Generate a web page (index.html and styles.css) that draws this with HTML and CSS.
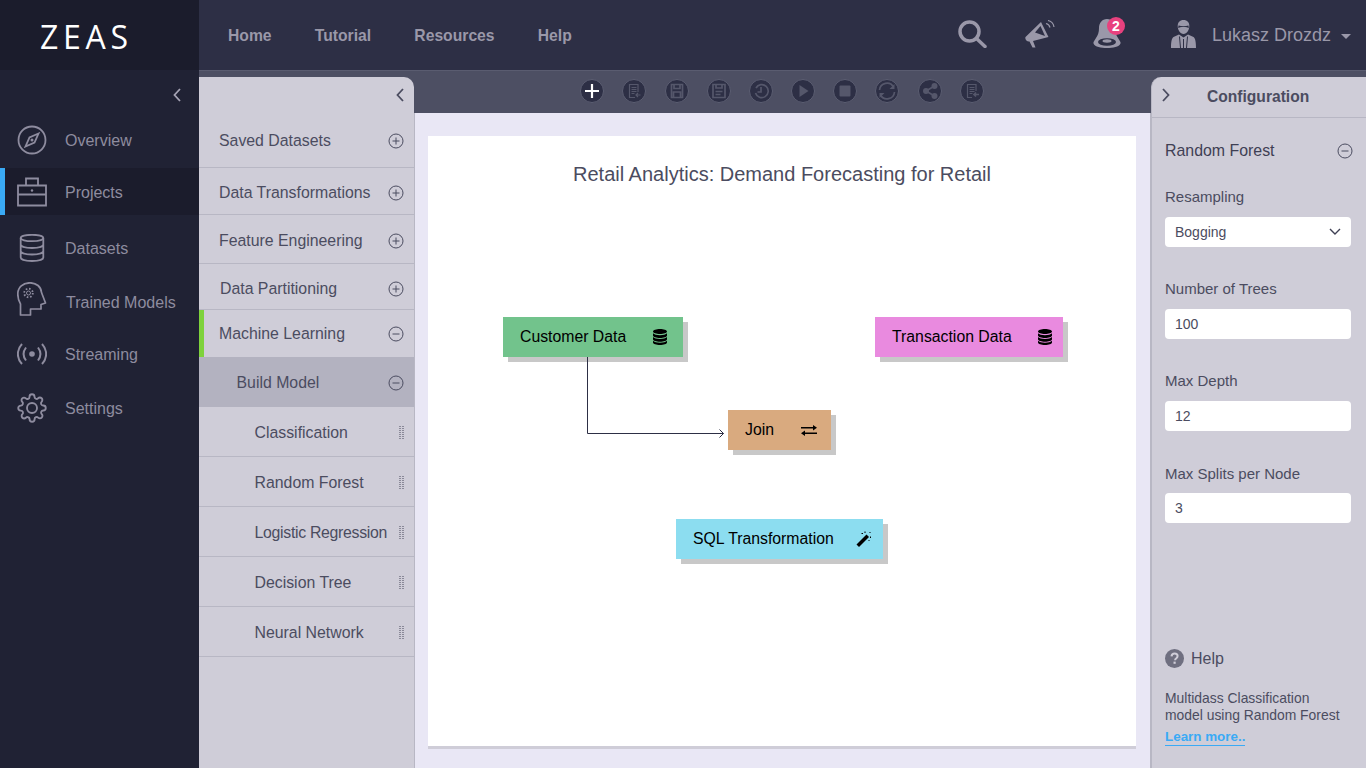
FILE: index.html
```html
<!DOCTYPE html>
<html lang="en">
<head>
<meta charset="utf-8">
<title>ZEAS</title>
<link rel="stylesheet" href="styles.css">
</head>
<body>
<svg class="defs" width="0" height="0" aria-hidden="true">
  <symbol id="plus" viewBox="0 0 16 16"><circle cx="8" cy="8" r="7" fill="none" stroke="#4b4c60" stroke-width="1"/><path d="M4.500 8h7M8 4.500v7" stroke="#4b4c60" stroke-width="1" fill="none"/></symbol>
  <symbol id="minus" viewBox="0 0 16 16"><circle cx="8" cy="8" r="7" fill="none" stroke="#4b4c60" stroke-width="1"/><path d="M4.500 8h7" stroke="#4b4c60" stroke-width="1" fill="none"/></symbol>
  <symbol id="db" viewBox="0 0 16 16"><path d="M8 0C4.300 0 1 1 1 2.500S4.300 5 8 5s7-1 7-2.500S11.700 0 8 0zM1 4.300v2.200C1 8 4.300 9 8 9s7-1 7-2.500V4.300C14 5.600 11 6.200 8 6.200S2 5.600 1 4.300zM1 8v2.300c0 1.500 3.300 2.500 7 2.500s7-1 7-2.500V8c-1 1.300-4 2-7 2s-6-.7-7-2zM1 11.700v1.800C1 15 4.300 16 8 16s7-1 7-2.500v-1.800c-1 1.300-4 2-7 2s-6-.7-7-2z" fill="#000"/></symbol>
</svg>
<div class="app">
  <div class="logo">ZEAS</div>
  <header class="topbar">
    <nav class="topnav">
      <a>Home</a><a>Tutorial</a><a>Resources</a><a>Help</a>
    </nav>
    <div class="tools">
      <svg class="ti-search" width="30" height="28" viewBox="0 0 30 28"><circle cx="12.500" cy="11.500" r="9.500" fill="none" stroke="#9a98a9" stroke-width="3.500"/><path d="M19.500 18.500l8.500 8" stroke="#9a98a9" stroke-width="3.500" stroke-linecap="round"/></svg>
      <svg class="ti-mega" width="30" height="28" viewBox="0 0 30 28"><path d="M.5 17L16 2l7.500 15L8 21l2.500 6.500h-3L4.500 21.500C2 22-.5 19 .5 17z" fill="#9a98a9"/><path d="M15.500 6L10 12.500l10 3.500z" fill="#2d2f45"/><path d="M21 3.500c2 .5 3.500 2 4 4M23 .5c3 .7 5.500 3 6 6.500" fill="none" stroke="#9a98a9" stroke-width="1.200"/></svg>
      <div class="bell">
        <svg width="28" height="29" viewBox="0 0 28 29"><path d="M14 0C9 0 6 4 6 9c0 4.500-1 7-3 10-1.500 2.500-3 4-2.500 5.500C2 28 8 29 14 29s12-1 13.500-4.500c.5-1.500-1-3-2.500-5.500-2-3-3-5.500-3-10 0-5-3-9-8-9z" fill="#9a98a9"/><ellipse cx="14" cy="23" rx="9" ry="3.800" fill="#2d2f45"/><ellipse cx="14" cy="22" rx="4.500" ry="1.700" fill="#9a98a9"/></svg>
        <span class="badge">2</span>
      </div>
      <div class="user">
        <svg class="ic-user" width="25" height="28" viewBox="0 0 25 28"><path d="M12.500 0c3.800 0 5.800 2.500 5.800 6 0 4-2.500 8-5.800 8s-5.800-4-5.800-8c0-3.500 2-6 5.800-6z" fill="#9a98a9"/><path d="M7.500 5.500c3 1 7 1 10 0l.3 2.500c-1-1.500-9.600-1.500-10.600 0z" fill="#2d2f45"/><path d="M8 14.500l4.500 3 4.500-3 5.500 2.500c1.500 1 2.500 4 2.500 11H0c0-7 1-10 2.500-11z" fill="#9a98a9"/><path d="M8.500 16.500l1 11.500M16.500 16.500l-1 11.500M12.500 19v9" stroke="#2d2f45" stroke-width="1" fill="none"/></svg>
        <span class="username">Lukasz Drozdz</span>
        <span class="caret"></span>
      </div>
    </div>
  </header>

  <aside class="sidenav">
    <div class="collapse"><svg width="10" height="16" viewBox="0 0 10 16"><path d="M8 2L2.500 8 8 14" fill="none" stroke="#a5a3b4" stroke-width="1.800"/></svg></div>
    <a class="navitem h56">
      <svg width="30" height="30" viewBox="0 0 30 30"><circle cx="15" cy="15" r="13.500" fill="none" stroke="#8e8c9f" stroke-width="1.800"/><path d="M21.500 8.500l-9 4-4 9 9-4z" fill="none" stroke="#8e8c9f" stroke-width="1.800"/><circle cx="15" cy="15" r="1.500" fill="#8e8c9f"/></svg>
      <span>Overview</span>
    </a>
    <a class="navitem active h47">
      <svg class="ic-case" width="30" height="30" viewBox="0 0 30 30"><path d="M1 8.500h28v20H1zM1 17.500h28M9 8.500V1.500h12v7" fill="none" stroke="#8e8c9f" stroke-width="1.800"/><circle cx="15" cy="13.500" r="1.200" fill="#8e8c9f"/></svg>
      <span>Projects</span>
    </a>
    <a class="navitem h66">
      <svg class="ic-db" width="30" height="28" viewBox="0 0 30 28"><ellipse cx="15" cy="4" rx="11.300" ry="3.200" fill="none" stroke="#8e8c9f" stroke-width="1.800"/><path d="M3.700 4v19.500c0 2 5 3.500 11.300 3.500s11.300-1.500 11.300-3.500V4M3.700 10.500c0 2 5 3.500 11.300 3.500s11.300-1.500 11.300-3.500M3.700 17c0 2 5 3.500 11.300 3.500S26.300 19 26.300 17" fill="none" stroke="#8e8c9f" stroke-width="1.800"/></svg>
      <span>Datasets</span>
    </a>
    <a class="navitem h42">
      <svg class="ic-head" width="30" height="34" viewBox="0 0 30 34"><path d="M3.500 33V22C1.500 19 .8 15 .8 12 .8 5 6 .8 13 .8c6.500 0 11 4 11.500 9.700L28.500 21l-4.500 1.500V27H13.500v6z" fill="none" stroke="#8e8c9f" stroke-width="1.700" stroke-linejoin="round"/><circle cx="11.500" cy="11" r="2" fill="none" stroke="#8e8c9f" stroke-width="1"/><circle cx="11.500" cy="11" r="4.300" fill="none" stroke="#8e8c9f" stroke-width="1.800" stroke-dasharray="1.600 1.780"/></svg>
      <span class="t1">Trained Models</span>
    </a>
    <a class="navitem h62">
      <svg width="30" height="24" viewBox="0 0 30 24"><circle cx="15" cy="12" r="2.800" fill="#8e8c9f"/><path d="M9 5.500c-3 4-3 9 0 13M21 5.500c3 4 3 9 0 13M5 2c-5.500 6-5.500 14 0 20M25 2c5.500 6 5.500 14 0 20" fill="none" stroke="#8e8c9f" stroke-width="2"/></svg>
      <span>Streaming</span>
    </a>
    <a class="navitem h46">
      <svg width="30" height="30" viewBox="0 0 24 24" fill="none" stroke="#8e8c9f" stroke-width="1.500"><circle cx="12" cy="12" r="4"/><path d="M19.400 15a1.650 1.650 0 0 0 .33 1.820l.06.06a2 2 0 0 1 0 2.830 2 2 0 0 1-2.830 0l-.06-.06a1.650 1.650 0 0 0-1.820-.33 1.650 1.650 0 0 0-1 1.510V21a2 2 0 0 1-2 2 2 2 0 0 1-2-2v-.09A1.650 1.650 0 0 0 9 19.400a1.650 1.650 0 0 0-1.820.33l-.06.06a2 2 0 0 1-2.830 0 2 2 0 0 1 0-2.830l.06-.06a1.650 1.650 0 0 0 .33-1.820 1.650 1.650 0 0 0-1.510-1H3a2 2 0 0 1-2-2 2 2 0 0 1 2-2h.09A1.650 1.650 0 0 0 4.600 9a1.650 1.650 0 0 0-.33-1.820l-.06-.06a2 2 0 0 1 0-2.830 2 2 0 0 1 2.830 0l.06.06a1.650 1.650 0 0 0 1.820.33H9a1.650 1.650 0 0 0 1-1.510V3a2 2 0 0 1 2-2 2 2 0 0 1 2 2v.09a1.650 1.650 0 0 0 1 1.510 1.650 1.650 0 0 0 1.820-.33l.06-.06a2 2 0 0 1 2.830 0 2 2 0 0 1 0 2.830l-.06.06a1.650 1.650 0 0 0-.33 1.820V9a1.650 1.650 0 0 0 1.510 1H21a2 2 0 0 1 2 2 2 2 0 0 1-2 2h-.09a1.650 1.650 0 0 0-1.510 1z"/></svg>
      <span>Settings</span>
    </a>
  </aside>

  <main class="workspace">
    <section class="library">
      <div class="libhead"><svg width="10" height="16" viewBox="0 0 10 16"><path d="M8 2L2.500 8 8 14" fill="none" stroke="#4b4c60" stroke-width="1.800"/></svg></div>
      <div class="lrow r55"><span>Saved Datasets</span><svg class="pm"><use href="#plus"/></svg></div>
      <div class="lrow r47"><span>Data Transformations</span><svg class="pm"><use href="#plus"/></svg></div>
      <div class="lrow r49"><span>Feature Engineering</span><svg class="pm"><use href="#plus"/></svg></div>
      <div class="lrow r46"><span class="shift1">Data Partitioning</span><svg class="pm"><use href="#plus"/></svg></div>
      <div class="lrow r47 open"><span>Machine Learning</span><svg class="pm"><use href="#minus"/></svg></div>
      <div class="lrow r50 build"><span>Build Model</span><svg class="pm"><use href="#minus"/></svg></div>
      <div class="lrow r50 leaf"><span>Classification</span><i class="grip"></i></div>
      <div class="lrow r50 leaf"><span>Random Forest</span><i class="grip"></i></div>
      <div class="lrow r50 leaf"><span class="tight">Logistic Regression</span><i class="grip"></i></div>
      <div class="lrow r50 leaf"><span>Decision Tree</span><i class="grip"></i></div>
      <div class="lrow r50 leaf"><span>Neural Network</span><i class="grip"></i></div>
    </section>

    <section class="center">
      <div class="toolbar">
        <svg class="tb" viewBox="0 0 24 24"><circle cx="12" cy="12" r="11.500"/><path d="M12 5v14M5 12h14" stroke="#fff" stroke-width="2.200" fill="none"/></svg>
        <svg class="tb" viewBox="0 0 24 24"><circle cx="12" cy="12" r="11.500"/><path class="g" d="M16 13V5.500H7.500v13H13M9.500 8.500h5M9.500 10.500h5M9.500 12.500h5M9.500 14.500h3"/><path class="g" d="M18.500 16h-4M16 14l-2 2 2 2"/></svg>
        <svg class="tb" viewBox="0 0 24 24"><circle cx="12" cy="12" r="11.500"/><path class="g w2" d="M6.500 5.500h11v13h-11zM9 5.500v4h6v-4M8.500 13h7v5.500h-7z"/></svg>
        <svg class="tb" viewBox="0 0 24 24"><circle cx="12" cy="12" r="11.500"/><path class="g w2" d="M6 5.500h12v13H6zM9 5.500v3.500h6V5.500M8.500 12.500h7M8.500 15.500h5"/></svg>
        <svg class="tb" viewBox="0 0 24 24"><circle cx="12" cy="12" r="11.500"/><path class="g w2" d="M7 9a6.500 6.500 0 1 1-.5 5M12 8v5H8.500"/></svg>
        <svg class="tb" viewBox="0 0 24 24"><circle cx="12" cy="12" r="11.500"/><path class="f" d="M8.500 6l9 6-9 6z"/></svg>
        <svg class="tb" viewBox="0 0 24 24"><circle cx="12" cy="12" r="11.500"/><rect class="f" x="6.500" y="6.500" width="11" height="11" rx="1"/></svg>
        <svg class="tb" viewBox="0 0 24 24"><circle cx="12" cy="12" r="11.500"/><path class="g w2" d="M4.500 11a7.500 7.500 0 0 1 14-3M19.500 13a7.500 7.500 0 0 1-14 3"/><path class="f" d="M19.500 5v5h-5zM4.500 19v-5h5z"/></svg>
        <svg class="tb" viewBox="0 0 24 24"><circle cx="12" cy="12" r="11.500"/><path class="g w2" d="M16.500 7L8 12l8.500 5"/><circle class="f" cx="16.500" cy="7" r="3"/><circle class="f" cx="8" cy="12" r="3"/><circle class="f" cx="16.500" cy="17" r="3"/></svg>
        <svg class="tb" viewBox="0 0 24 24"><circle cx="12" cy="12" r="11.500"/><path class="g" d="M16 12V5.500H7.500v13H12M9.500 8.500h5M9.500 10.500h5M9.500 12.500h5M9.500 14.500h3"/><path class="g w2" d="M19 15.500h-5M16 13.500l-2 2 2 2"/></svg>
      </div>
      <div class="stage">
        <div class="canvas">
          <h1 class="title">Retail Analytics: Demand Forecasting for Retail</h1>
          <div class="node n-customer"><span>Customer Data</span><svg width="16" height="16"><use href="#db"/></svg></div>
          <div class="node n-transaction"><span>Transaction Data</span><svg width="16" height="16"><use href="#db"/></svg></div>
          <div class="node n-join"><span>Join</span><svg width="16" height="11" viewBox="0 0 16 11"><path d="M0 2h12V0l4 2.800-4 2.800V3.600H0zM16 7.400H4V5.400L0 8.200 4 11V9h12z" fill="#000"/></svg></div>
          <div class="node n-sql"><span>SQL Transformation</span><svg width="16" height="16" viewBox="0 0 16 16"><path d="M.5 13.500L10.500 3.500l2.500 2.500L3 16z" fill="#000"/><path d="M9 .5v1.500M14.500 5.500v1.500M5.500 2.500h1.500M13.500 1l1 1M13 9v1" stroke="#000" stroke-width="1"/></svg></div>
          <svg class="wire" width="150" height="90" viewBox="0 0 150 90"><path d="M.5 0v76.500h136M132.500 72.500l4 4-4 4" fill="none" stroke="#2d2f45" stroke-width="1"/></svg>
        </div>
      </div>
    </section>

    <section class="config">
      <div class="confhead"><svg width="10" height="16" viewBox="0 0 10 16"><path d="M2 2l5.500 6L2 14" fill="none" stroke="#4b4c60" stroke-width="1.800"/></svg><span>Configuration</span></div>
      <div class="confbody">
        <div class="confsec"><span>Random Forest</span><svg class="pm"><use href="#minus"/></svg></div>
        <label class="fl f1">Resampling</label>
        <div class="inp sel"><span>Bogging</span><svg width="12" height="8" viewBox="0 0 12 8"><path d="M1 1l5 5 5-5" fill="none" stroke="#3f4054" stroke-width="1.400"/></svg></div>
        <label class="fl f2">Number of Trees</label>
        <div class="inp"><span>100</span></div>
        <label class="fl f3">Max Depth</label>
        <div class="inp"><span>12</span></div>
        <label class="fl f4">Max Splits per Node</label>
        <div class="inp last"><span>3</span></div>
      </div>
      <div class="help">
        <div class="helphead"><svg width="19" height="19" viewBox="0 0 19 19"><circle cx="9.500" cy="9.500" r="9.500" fill="#6f6f80"/><path d="M6.500 7.300c.2-1.800 1.400-2.700 3.100-2.700 1.800 0 3 1 3 2.500 0 1.200-.7 1.800-1.500 2.400-.8.500-1 .9-1 1.700" fill="none" stroke="#cfcdd8" stroke-width="2"/><rect x="8.500" y="12.600" width="2.200" height="2.200" fill="#cfcdd8"/></svg><span>Help</span></div>
        <p>Multidass Classification<br>model using Random Forest</p>
        <a class="more">Learn more..</a>
      </div>
    </section>
  </main>
</div>
</body>
</html>
```
FILE: styles.css
```css
* { box-sizing: border-box; }
html, body { margin: 0; height: 100%; }
body { font-family: "Liberation Sans", Arial, sans-serif; font-size: 16px; overflow: hidden; }
.defs { position: absolute; }
.app { display: grid; grid-template-columns: 199px 1fr; grid-template-rows: 70px 698px; width: 1366px; height: 768px; }

.logo { background: #1b1c2c; color: #fff; font-family: "Open Sans", sans-serif; font-size: 32px; letter-spacing: 4.700px; display: flex; align-items: center; padding-left: 40px; padding-top: 3px; }
.topbar { background: #2d2f45; display: flex; justify-content: space-between; align-items: center; padding: 0 15px 0 29px; }
.topnav { display: flex; gap: 43.200px; font-size: 15.700px; font-weight: bold; color: #9a98a9; padding-top: 1px; }
.tools { display: flex; align-items: center; }
.ti-search { margin-right: 38px; margin-bottom: 2px; }
.ti-mega { margin-right: 38px; margin-bottom: 2px; }
.bell { position: relative; width: 28px; height: 29px; margin-right: 50px; margin-bottom: 3px; }
.bell svg { display: block; }
.badge { position: absolute; top: -2px; left: 14px; width: 18px; height: 18px; border-radius: 50%; background: #e8417e; color: #fff; font-size: 14px; font-weight: bold; line-height: 18px; text-align: center; }
.user { display: flex; align-items: center; color: #9a98a9; font-size: 18px; }
.ic-user { margin-bottom: 2px; }
.username { margin-left: 16px; padding-top: 1px; }
.caret { width: 0; height: 0; border-left: 5px solid transparent; border-right: 5px solid transparent; border-top: 5px solid #9a98a9; margin-left: 10px; margin-top: 2px; }

.sidenav { background: #202234; display: flex; flex-direction: column; color: #8e8c9f; }
.collapse { height: 42px; display: flex; align-items: center; justify-content: flex-end; padding: 7px 17px 0 0; }
.navitem { display: flex; align-items: center; padding-left: 17px; gap: 18px; }
.navitem span { padding-top: 2px; }
.navitem.active { background: #1b1c2c; box-shadow: inset 5px 0 0 #3aaaf5; }
.ic-head { margin-bottom: 6px; }
.ic-db { margin-bottom: 1px; }
.t1 { margin-left: 1px; }
.h56 { height: 56px; } .h47 { height: 47px; } .h66 { height: 66px; } .h42 { height: 42px; } .h62 { height: 62px; } .h46 { height: 46px; }

.workspace { background: #4d4f63; border-top: 1px solid #5a5c70; display: flex; min-height: 0; }
.library { width: 215px; margin-top: 6px; background: #cfcdd8; border-top-right-radius: 10px; display: flex; flex-direction: column; color: #4b4c60; flex: none; font-size: 15.850px; }
.libhead { height: 36px; display: flex; justify-content: flex-end; align-items: center; padding-right: 9px; }
.lrow { display: flex; align-items: center; justify-content: space-between; padding: 0 10px 0 20px; border-bottom: 1px solid #b8b7c4; flex: none; }
.r55 { height: 55px; padding-top: 2px; } .r47 { height: 47px; padding-top: 4px; } .r49 { height: 49px; padding-top: 4px; } .r46 { height: 46px; padding-top: 4px; } .r50 { height: 50px; padding-top: 2px; }
.shift1 { margin-left: 1px; }
.tight { letter-spacing: -.3px; }
.open { box-shadow: inset 5px 0 0 #7ed23c; border-bottom: 0; padding-top: 0; }
.build { background: #b3b2c0; padding-left: 37.500px; border-bottom: 0; }
.leaf { padding-left: 55.500px; }
.pm { width: 16px; height: 16px; flex: none; }
.grip { width: 5px; height: 14px; flex: none; background: linear-gradient(to right, transparent 2px, #cfcdd8 2px 3px, transparent 3px), repeating-linear-gradient(to bottom, #8a8998 0 1px, transparent 1px 2px); }

.center { flex: 1; min-width: 0; display: flex; flex-direction: column; }
.toolbar { height: 42px; padding: 0 1px 2px 0; display: flex; align-items: center; justify-content: center; gap: 18.200px; flex: none; }
.tb { width: 24px; height: 24px; flex: none; }
.tb circle:first-child { fill: #2d2f45; stroke: #5c5e72; stroke-width: 1; }
.tb .g { fill: none; stroke: #55576b; stroke-width: 1.200; }
.tb .w2 { stroke-width: 1.700; }
.tb .f { fill: #55576b; stroke: none; }
.stage { flex: 1; background: #e9e7f5; border-left: 1px solid #b8b7c4; border-right: 1px solid #b8b7c4; padding: 23px 14px 19px 13px; display: flex; min-height: 0; }
.canvas { flex: 1; background: #fff; border-bottom: 3px solid #cfcdd8; position: relative; }
.title { position: absolute; top: 26px; left: 0; right: 0; margin: 0; text-align: center; font-size: 20px; font-weight: normal; color: #4b4c60; line-height: 24px; }
.wire { position: absolute; left: 159px; top: 221px; }
.node { position: absolute; height: 40px; display: flex; align-items: center; justify-content: space-between; padding: 0 15px 0 17px; color: #000; font-size: 15.800px; box-shadow: 5px 5px 0 #c8c8c8; }
.n-customer { left: 75px; top: 181px; width: 180px; background: #72c38c; }
.n-transaction { left: 447px; top: 181px; width: 188px; background: #e98adf; padding-right: 10px; }
.n-join { left: 300px; top: 274px; width: 103px; background: #d9aa7f; padding-right: 14px; }
.n-sql { left: 248px; top: 383px; width: 207px; background: #8cddf0; padding-right: 11px; }

.config { width: 215px; margin-top: 6px; background: #cfcdd8; border-top-left-radius: 10px; border-left: 1px solid #b8b7c4; display: flex; flex-direction: column; flex: none; color: #4b4c60; }
.confhead { height: 41px; display: flex; align-items: center; padding-left: 9px; border-bottom: 1px solid #b8b7c4; font-weight: bold; font-size: 15.600px; flex: none; }
.confhead svg { margin-top: -5px; }
.confhead span { margin-left: 36px; }
.confbody { padding: 0 15px 0 13px; display: flex; flex-direction: column; flex: none; }
.confsec { height: 64px; padding-top: 2px; display: flex; align-items: center; justify-content: space-between; color: #3f4054; font-size: 15.900px; margin-right: -2px; }
.fl { font-size: 15px; display: block; line-height: 18px; }
.f1 { margin-top: 6px; }
.f2 { margin-top: 33px; }
.f3 { margin-top: 33px; }
.f4 { margin-top: 34px; }
.inp { height: 30px; background: #fff; border-radius: 4px; margin-top: 11px; padding: 0 10px; font-size: 14px; color: #4b4c60; display: flex; align-items: center; justify-content: space-between; }
.last { margin-top: 10px; }
.help { margin-top: auto; padding: 0 13px 22px; }
.helphead { display: flex; align-items: center; gap: 7px; }
.help p { margin: 22px 0 0; font-size: 13.900px; line-height: 17px; }
.more { display: inline-block; margin-top: 5px; font-size: 13.400px; font-weight: bold; color: #3aaaf5; border-bottom: 1px solid #3aaaf5; line-height: 16px; }
```
